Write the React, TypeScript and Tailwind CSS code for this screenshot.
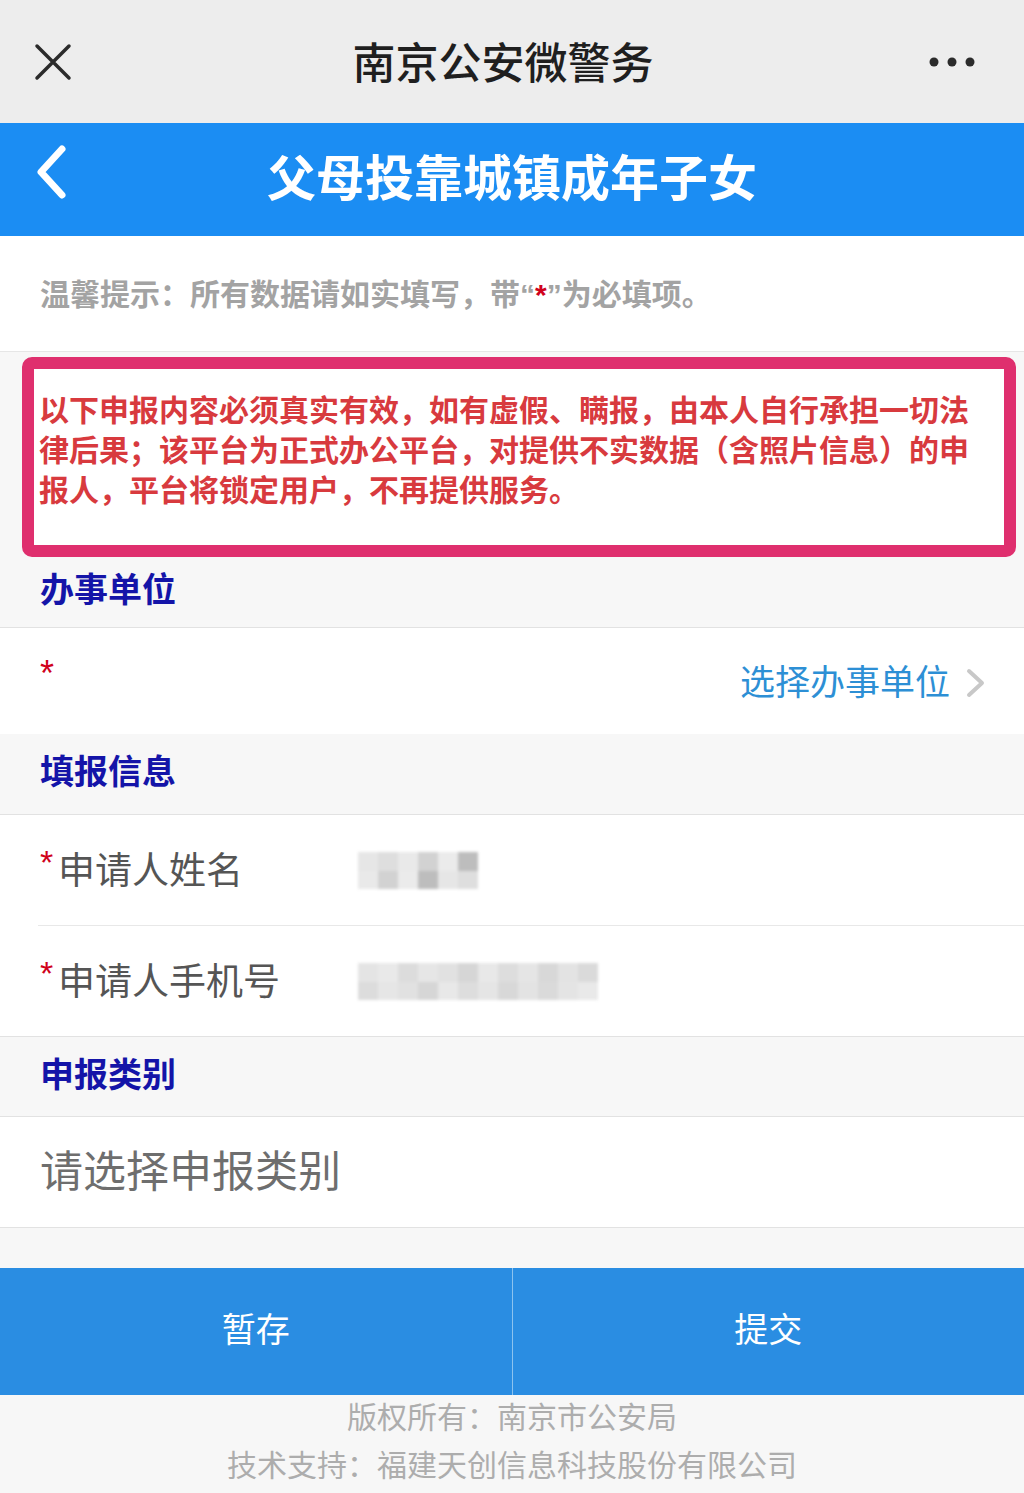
import React from 'react';

const font = { fontFamily: '"Noto Sans CJK SC", "Noto Sans", sans-serif' };
const latin = { fontFamily: '"Liberation Sans", sans-serif' };

const Mosaic: React.FC<{ cells: string[]; w: number }> = ({ cells, w }) => (
  <div className="flex flex-col blur-[1.5px]">
    <div className="flex">
      {cells.map((c, i) => (
        <div key={i} className="h-[19px]" style={{ width: w, background: c }} />
      ))}
    </div>
    <div className="flex">
      {cells.map((c, i) => (
        <div key={i} className="h-[18px]" style={{ width: w, background: cells[(i + 2) % cells.length] }} />
      ))}
    </div>
  </div>
);

const SectionTitle: React.FC<{ children: React.ReactNode; h: string }> = ({ children, h }) => (
  <div className={`flex items-center bg-[#f7f7f7] border-b border-[#e2e2e2] pl-[40px] ${h}`}>
    <span className="text-[34px] font-bold text-[#1414a8] leading-none -mt-[8px]">{children}</span>
  </div>
);

const Star: React.FC = () => (
  <span className="text-[34px] text-[#d0021b] leading-none -mt-[12px] w-[18px]" style={latin}>*</span>
);

export default function App() {
  return (
    <div className="w-[1024px] h-[1493px] bg-[#f7f7f7] flex flex-col overflow-hidden" style={font}>
      {/* wechat top bar */}
      <div className="h-[123px] bg-[#ededed] flex items-center justify-between pl-[34px] pr-[46px]">
        <svg width="38" height="38" viewBox="0 0 38 38">
          <path d="M3 3 L35 35 M35 3 L3 35" stroke="#2b2b2b" strokeWidth="3.5" strokeLinecap="round" />
        </svg>
        <span className="text-[43px] text-[#1f1f1f] font-medium leading-none ml-[6px] -mt-[3px]">南京公安微警务</span>
        <svg width="50" height="12" viewBox="0 0 50 12">
          <circle cx="6" cy="6" r="4.5" fill="#2b2b2b" />
          <circle cx="24" cy="6" r="4.5" fill="#2b2b2b" />
          <circle cx="42" cy="6" r="4.5" fill="#2b2b2b" />
        </svg>
      </div>

      {/* blue page header */}
      <div className="h-[113px] bg-[#1b8df3] relative flex items-center justify-center">
        <svg width="40" height="60" viewBox="0 0 40 60" className="absolute left-[32px] top-[20px]">
          <path d="M30 6 L9 29 L30 52" stroke="#ffffff" strokeWidth="7" fill="none" strokeLinecap="round" strokeLinejoin="round" />
        </svg>
        <span className="text-[49px] font-bold text-white leading-none -mt-[10px]">父母投靠城镇成年子女</span>
      </div>

      {/* tip */}
      <div className="h-[116px] bg-white border-b border-[#e6e6e6] flex items-center pl-[40px]">
        <span className="text-[30px] font-semibold text-[#a3a3a3] leading-none">
          温馨提示：所有数据请如实填写，带
          <span style={latin}>
            “<span className="text-[#d0021b]">*</span>”
          </span>
          为必填项。
        </span>
      </div>

      {/* warning box */}
      <div className="pt-[5px] pl-[22px] pr-[8px] bg-[#f7f7f7]">
        <div className="border-[12px] border-[#df2f6e] rounded-[10px] bg-white pt-[19px] pb-[37px] pl-[5px] pr-[20px]">
          <p className="text-[30px] font-bold text-[#d83a3e] leading-[40px]">
            以下申报内容必须真实有效，如有虚假、瞒报，由本人自行承担一切法律后果；该平台为正式办公平台，对提供不实数据（含照片信息）的申报人，平台将锁定用户，不再提供服务。
          </p>
        </div>
      </div>

      <SectionTitle h="h-[71px]">办事单位</SectionTitle>
      <div className="h-[106px] bg-white flex items-center justify-between pl-[40px] pr-[38px]">
        <span className="text-[36px] text-[#d0021b] -mt-[14px]" style={latin}>*</span>
        <div className="flex items-center gap-[16px]">
          <span className="text-[35px] text-[#2d8fd5] leading-none -mt-[4px]">选择办事单位</span>
          <svg width="20" height="30" viewBox="0 0 20 30" className="mt-[4px]">
            <path d="M3 3 L16 15 L3 27" stroke="#c8c8c8" strokeWidth="4" fill="none" strokeLinecap="round" strokeLinejoin="round" />
          </svg>
        </div>
      </div>

      <SectionTitle h="h-[81px]">填报信息</SectionTitle>
      <div className="bg-white">
        <div className="ml-[38px] h-[111px] flex items-center pl-[2px] border-b border-[#e8e8e8]">
          <div className="w-[318px] flex items-center -mt-[4px]">
            <Star />
            <span className="text-[37px] text-[#555555] leading-none">申请人姓名</span>
          </div>
          <Mosaic w={20} cells={['#e6e6e6', '#dedede', '#e9e9e9', '#d2d2d2', '#ebebeb', '#bdbdbd']} />
        </div>
        <div className="h-[111px] flex items-center pl-[40px] border-b border-[#e2e2e2]">
          <div className="w-[318px] flex items-center -mt-[4px]">
            <Star />
            <span className="text-[37px] text-[#555555] leading-none">申请人手机号</span>
          </div>
          <Mosaic
            w={20}
            cells={['#e4e4e4', '#e9e9e9', '#dcdcdc', '#e6e6e6', '#e1e1e1', '#d6d6d6', '#e8e8e8', '#dddddd', '#e5e5e5', '#d8d8d8', '#e3e3e3', '#dadada']}
          />
        </div>
      </div>

      <SectionTitle h="h-[80px]">申报类别</SectionTitle>
      <div className="h-[111px] bg-white border-b border-[#e2e2e2] flex items-center pl-[40px]">
        <span className="text-[43px] text-[#6e6e6e] leading-none -mt-[8px]">请选择申报类别</span>
      </div>

      <div className="h-[40px] bg-[#f7f7f7]" />

      {/* buttons */}
      <div className="h-[127px] flex bg-[#2a8de2]">
        <button className="flex-1 flex items-center justify-center text-[34px] text-white border-r border-[#8cc3ef] pb-[8px]">暂存</button>
        <button className="flex-1 flex items-center justify-center text-[34px] text-white pb-[8px]">提交</button>
      </div>

      {/* footer */}
      <div className="flex flex-col items-center -mt-[4px] text-[30px] text-[#adadad] leading-[48px]">
        <span>版权所有：南京市公安局</span>
        <span>技术支持：福建天创信息科技股份有限公司</span>
      </div>
    </div>
  );
}
